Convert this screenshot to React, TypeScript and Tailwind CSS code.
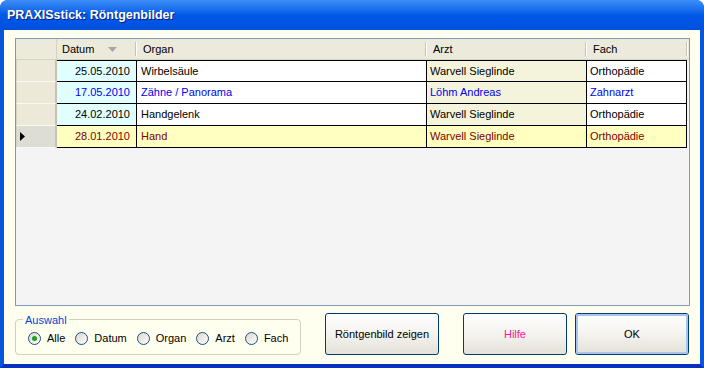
import React from "react";

const FONT = { fontFamily: '"Liberation Sans", Arial, sans-serif' };

type Row = {
  datum: string;
  organ: string;
  arzt: string;
  fach: string;
  color: string;
  selected?: boolean;
};

const rows: Row[] = [
  { datum: "25.05.2010", organ: "Wirbelsäule", arzt: "Warvell Sieglinde", fach: "Orthopädie", color: "text-black" },
  { datum: "17.05.2010", organ: "Zähne / Panorama", arzt: "Löhm Andreas", fach: "Zahnarzt", color: "text-[#0000F0]" },
  { datum: "24.02.2010", organ: "Handgelenk", arzt: "Warvell Sieglinde", fach: "Orthopädie", color: "text-black" },
  { datum: "28.01.2010", organ: "Hand", arzt: "Warvell Sieglinde", fach: "Orthopädie", color: "text-[#800000]", selected: true },
];

function HeaderSep() {
  return <div className="ml-auto mr-0 h-[14px] w-[2px] border-l border-[#C7C5B2] border-r border-r-white" />;
}

function Radio({ label, checked }: { label: string; checked?: boolean }) {
  return (
    <div className="flex items-center">
      <div className="flex h-[13px] w-[13px] items-center justify-center rounded-full border border-[#1C5180] bg-gradient-to-br from-[#DCD7CB] to-white">
        {checked && <div className="h-[5px] w-[5px] rounded-full bg-[#21A121]" />}
      </div>
      <span className="ml-[6px] text-[11px] text-black">{label}</span>
    </div>
  );
}

function Button({ children, className = "", def = false }: { children: React.ReactNode; className?: string; def?: boolean }) {
  return (
    <div className={`h-[42px] rounded-[3px] border border-[#003C74] bg-gradient-to-b from-white via-[#F4F3EE] to-[#E3E1D8] ${className}`}>
      <div className={`flex h-full w-full items-center justify-center rounded-[2px] text-[11px] ${def ? "border-2 border-[#A8C4F0]" : ""}`}>
        {children}
      </div>
    </div>
  );
}

export default function App() {
  return (
    <div className="h-[368px] w-[704px] overflow-hidden bg-white" style={FONT}>
      <div className="flex h-[368px] w-[704px] flex-col overflow-hidden rounded-t-[8px] bg-[#0855DD]">
        {/* title bar */}
        <div className="flex h-[30px] shrink-0 items-center bg-gradient-to-b from-[#3D8EF8] via-[#0058E6] to-[#0050E0] pl-[7px]">
          <span className="text-[12.5px] font-bold text-white [text-shadow:1px_1px_0_#0A1E7A]">PRAXISstick: Röntgenbilder</span>
        </div>
        {/* client */}
        <div className="flex flex-1 flex-col border-x-4 border-b-4 border-x-[#0855DD] border-b-[#0730C0] bg-[#FFFFF0] pl-[11px] pr-[10px] pt-[8px]">
          {/* grid */}
          <div className="flex h-[268px] w-[675px] flex-col border border-[#7F9DB9] bg-[#F4F4F4]">
            {/* header */}
            <div className="flex h-[21px] shrink-0 border-b border-b-[#D6D3C3] bg-[#EBEADB] text-[11px] text-black">
              <div className="w-[41px] border-r border-[#D6D3C3]" />
              <div className="flex w-[80px] items-center pl-[5px]">
                <span>Datum</span>
                <svg className="ml-auto mr-[4px]" width="9" height="5" viewBox="0 0 9 5">
                  <polygon points="0,0 9,0 4.5,5" fill="#A7A6AA" />
                </svg>
                <HeaderSep />
              </div>
              <div className="flex w-[290px] items-center pl-[6px]">
                <span>Organ</span>
                <HeaderSep />
              </div>
              <div className="flex w-[160px] items-center pl-[6px]">
                <span>Arzt</span>
                <HeaderSep />
              </div>
              <div className="flex w-[101px] items-center pl-[6px]">
                <span>Fach</span>
                <HeaderSep />
              </div>
            </div>
            {/* rows */}
            {rows.map((r, i) => {
              const bgDatum = r.selected ? "bg-[#FFFFC0]" : "bg-[#E2FFFF]";
              const bgWhite = r.selected ? "bg-[#FFFFC0]" : "bg-white";
              const bgArzt = r.selected ? "bg-[#FFFFC0]" : "bg-[#F4F4DC]";
              const top = i === 0 ? "border-t" : "";
              return (
                <div key={i} className={`flex h-[22px] shrink-0 text-[11px] ${r.color}`}>
                  <div
                    className={`flex w-[41px] items-center border-b border-l border-r-2 border-b-[#F8F8F2] border-l-[#D6D3C3] border-r-[#C5C2B2] pl-[3px] ${
                      r.selected ? "bg-[#DEDDD4]" : "bg-[#ECE9D8]"
                    }`}
                  >
                    {r.selected && (
                      <svg width="5" height="9" viewBox="0 0 5 9">
                        <polygon points="0,0 5,4.5 0,9" fill="#000" />
                      </svg>
                    )}
                  </div>
                  <div className={`flex w-[80px] items-center justify-end border-b border-r border-black pr-[6px] ${top} ${bgDatum}`}>
                    {r.datum}
                  </div>
                  <div className={`flex w-[290px] items-center border-b border-r border-black pl-[4px] ${top} ${bgWhite}`}>
                    {r.organ}
                  </div>
                  <div className={`flex w-[160px] items-center border-b border-r border-black pl-[3px] ${top} ${bgArzt}`}>
                    {r.arzt}
                  </div>
                  <div className={`flex w-[100px] items-center border-b border-r border-black pl-[3px] ${top} ${bgWhite}`}>
                    {r.fach}
                  </div>
                </div>
              );
            })}
          </div>
          {/* bottom */}
          <div className="mt-[7px] flex h-[42px] items-start">
            <div className="relative mt-[6px] flex h-[36px] w-[286px] items-center rounded-[4px] border border-[#D0D0BF] pl-[12px] pt-[2px]">
              <span className="absolute -top-[8px] left-[7px] bg-[#FFFFF0] px-[2px] text-[11px] text-[#0046D5]">Auswahl</span>
              <div className="flex items-center gap-[10px]">
                <Radio label="Alle" checked />
                <Radio label="Datum" />
                <Radio label="Organ" />
                <Radio label="Arzt" />
                <Radio label="Fach" />
              </div>
            </div>
            <Button className="ml-[24px] w-[114px]">Röntgenbild zeigen</Button>
            <Button className="ml-[24px] w-[104px]">
              <span className="text-[#FF1493]">Hilfe</span>
            </Button>
            <Button className="ml-[8px] w-[114px]" def>
              OK
            </Button>
          </div>
        </div>
      </div>
    </div>
  );
}
